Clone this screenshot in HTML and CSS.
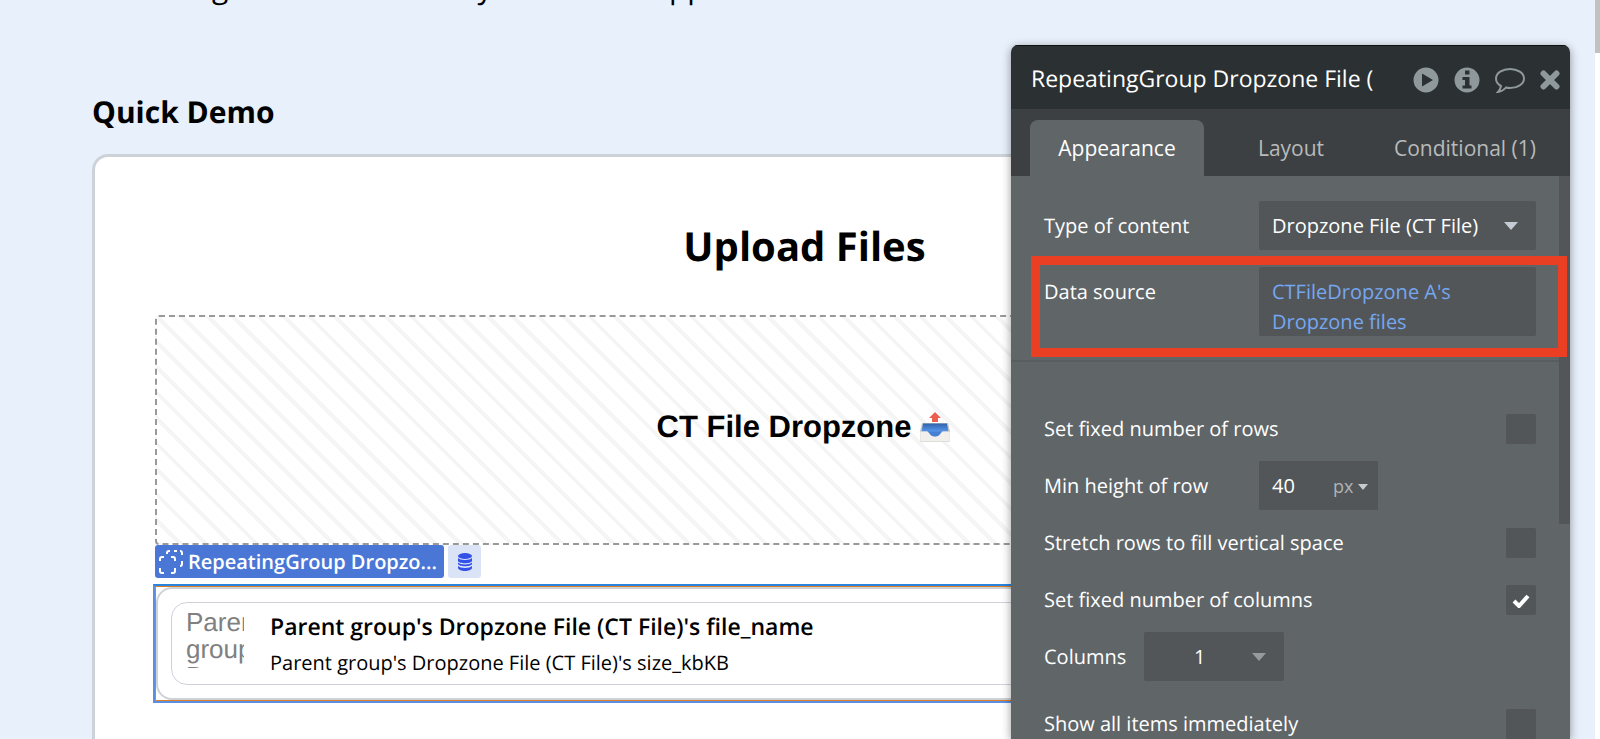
FILE: index.html
```html
<!DOCTYPE html>
<html lang="en">
<head>
  <meta charset="UTF-8">
  <title>File Dropzone Demo</title>
  <link rel="stylesheet" href="styles.css">
</head>
<body>
  <main class="page">
    <p class="intro">Collecting files from a steady data list in app</p>
    <h2 class="section-title">Quick Demo</h2>

    <section class="demo-card">
      <h1 class="demo-title">Upload Files</h1>

      <div class="dropzone">
        <span>CT File Dropzone</span>
        <svg class="tray-icon" viewBox="0 0 30 30" aria-hidden="true">
          <defs>
            <linearGradient id="tray" x1="0" y1="0" x2="0" y2="1">
              <stop offset="0" stop-color="#2f62ab"/>
              <stop offset="1" stop-color="#5a9bf0"/>
            </linearGradient>
          </defs>
          <path d="M2 11h26l2 8v9.500a1 1 0 0 1-1 1H1a1 1 0 0 1-1-1V19z" fill="#c9cbc8"/>
          <path d="M3 11.500h24l1.500 8.500H1.500z" fill="url(#tray)"/>
          <path d="M0 19.500h7c2.500 0 2.500 5 8 5s5.500-5 8-5h7v9a1 1 0 0 1-1 1H1a1 1 0 0 1-1-1z" fill="#f1f0ec" stroke="#d5d5d0" stroke-width=".6"/>
          <path d="M7 19.500h16c-2.500 0-2.500 5-8 5s-5.500-5-8-5z" fill="#4680d4"/>
          <path d="M15 0l6 6h-3v4h-6V6H9z" fill="#ec5f50"/>
        </svg>
      </div>

      <div class="element-tags">
        <span class="tag-name">
          <svg class="group-icon" viewBox="0 0 24 24" aria-hidden="true">
            <path d="M8 4V3a2 2 0 0 1 2-2h1M15 1h3M21 1h0a2 2 0 0 1 2 2v2M23 11v3a2 2 0 0 1-2 2M1 11V9a2 2 0 0 1 2-2h2M12 7h2a2 2 0 0 1 2 2v2M16 18v3a2 2 0 0 1-2 2h-2M5 23H3a2 2 0 0 1-2-2v-3"/>
          </svg>
          <span>RepeatingGroup Dropzo...</span>
        </span>
        <span class="tag-data">
          <svg class="data-icon" viewBox="0 0 14 18" aria-hidden="true">
            <ellipse cx="7" cy="3" rx="7" ry="3"/>
            <path d="M0 5c2 2.600 12 2.600 14 0v3c-1 3-13 3-14 0zM0 9.600c2 2.600 12 2.600 14 0v1.400c-1 3-13 3-14 0zM0 13c2 2.600 12 2.600 14 0v2c-1 4-13 4-14 0z"/>
          </svg>
        </span>
      </div>

      <div class="repeating-group">
        <div class="group-selection">
          <div class="group-frame">
            <div class="file-cell">
              <div class="file-thumb">Parent group's Dropzone</div>
              <div class="file-text">
                <div class="file-name">Parent group's Dropzone File (CT File)'s file_name</div>
                <div class="file-size">Parent group's Dropzone File (CT File)'s size_kbKB</div>
              </div>
            </div>
          </div>
        </div>
      </div>
    </section>
  </main>

  <div class="page-scrollbar"><div class="page-thumb"></div></div>

  <aside class="editor">
    <header class="editor-header">
      <span class="editor-title">RepeatingGroup Dropzone File (</span>
      <button class="icon-btn" aria-label="Preview">
        <svg width="26" height="26" viewBox="0 0 26 26"><path fill-rule="evenodd" d="M13 0.500a12.500 12.500 0 1 1 0 25a12.500 12.500 0 0 1 0-25zM9 6.500v13l11-6.500z"/></svg>
      </button>
      <button class="icon-btn" aria-label="Info">
        <svg width="26" height="26" viewBox="0 0 26 26"><path fill-rule="evenodd" d="M13 0.500a12.500 12.500 0 1 1 0 25a12.500 12.500 0 0 1 0-25zM11 3.500v4h4.500v-4zM8.500 10v3H11v5.500H8.500v3h9v-3h-2V10z"/></svg>
      </button>
      <button class="icon-btn" aria-label="Comment">
        <svg width="30" height="26" viewBox="0 0 30 26"><path class="line" d="M15 2c7.500 0 14 4 14 9.500S22.500 21 15 21c-1.500 0-2.500 0-4-.5C9 23 6.500 24.500 3 25c1.500-1.500 2.500-3 3-6C3 17.500 1 14.500 1 11.500C1 6 7.500 2 15 2z"/></svg>
      </button>
      <button class="icon-btn" aria-label="Close">
        <svg width="20" height="20" viewBox="0 0 20 20"><path class="cross" d="M3.500 3.500l13 13M16.500 3.500l-13 13"/></svg>
      </button>
    </header>

    <nav class="tabs">
      <button class="tab tab-active">Appearance</button>
      <button class="tab">Layout</button>
      <button class="tab">Conditional (1)</button>
    </nav>

    <div class="properties">
      <div class="data-section">
        <div class="row">
          <label class="row-label" for="content-type">Type of content</label>
          <span class="select-box wide">
            <select id="content-type"><option>Dropzone File (CT File)</option></select>
            <svg class="caret" viewBox="0 0 14 8" aria-hidden="true"><path d="M0 0h14L7 8z"/></svg>
          </span>
        </div>
        <div class="row row-source">
          <span class="row-label">Data source</span>
          <a class="expression wide" href="#">CTFileDropzone A's Dropzone files</a>
          <div class="highlight"></div>
        </div>
      </div>

      <div class="layout-section">
        <div class="row">
          <label class="row-label" for="fixed-rows">Set fixed number of rows</label>
          <input class="check" type="checkbox" id="fixed-rows">
        </div>
        <div class="row">
          <label class="row-label" for="min-height">Min height of row</label>
          <span class="unit-box">
            <input class="number" type="text" id="min-height" value="40">
            <button class="unit">px <svg class="caret-small" viewBox="0 0 10 6" aria-hidden="true"><path d="M0 0h10L5 6z"/></svg></button>
          </span>
        </div>
        <div class="row">
          <label class="row-label" for="stretch">Stretch rows to fill vertical space</label>
          <input class="check" type="checkbox" id="stretch">
        </div>
        <div class="row">
          <label class="row-label" for="fixed-columns">Set fixed number of columns</label>
          <span class="check-wrap">
            <input class="check" type="checkbox" id="fixed-columns" checked>
            <svg class="check-mark" viewBox="0 0 18 14" aria-hidden="true"><path d="M2 7l5 5L16 2"/></svg>
          </span>
        </div>
        <div class="row">
          <label class="row-label label-short" for="columns">Columns</label>
          <span class="select-box narrow">
            <select id="columns"><option>1</option></select>
            <svg class="caret caret-dim" viewBox="0 0 14 8" aria-hidden="true"><path d="M0 0h14L7 8z"/></svg>
          </span>
        </div>
        <div class="row row-last">
          <label class="row-label" for="show-all">Show all items immediately</label>
          <input class="check" type="checkbox" id="show-all">
        </div>
      </div>
      <div class="editor-thumb"></div>
    </div>
  </aside>
</body>
</html>
```

FILE: styles.css
```css
* {
  box-sizing: border-box;
}
body {
  margin: 0;
  height: 100vh;
  overflow: hidden;
  background: #e8f0fb;
  font-family: "Open Sans", sans-serif;
  text-rendering: geometricPrecision;
  color: #000;
}
button, input, select {
  font: inherit;
  color: inherit;
  border: none;
  background: none;
  padding: 0;
  margin: 0;
}

/* page behind the editor */
.page {
  display: flex;
  flex-direction: column;
  height: 100vh;
  padding: 0 83px 0 92px;
}
.intro {
  margin: -35px 0 0;
  font-size: 30px;
  line-height: 44px;
}
.section-title {
  margin: 83px 0 22px;
  font-size: 30px;
  line-height: 40px;
}
.demo-card {
  flex: 1;
  min-height: 0;
  padding: 61px 60px 0;
  background: #fff;
  border: 3px solid #cdd2d8;
  border-bottom: none;
  border-radius: 16px 16px 0 0;
}
.demo-title {
  margin: 0 0 41px;
  font-size: 40px;
  line-height: 56px;
  text-align: center;
}
.dropzone {
  display: flex;
  align-items: center;
  justify-content: center;
  gap: 9px;
  height: 230px;
  padding: 0 2px 7px 0;
  border: 2px dashed #999;
  border-radius: 4px;
  background: repeating-linear-gradient(45deg, #fff, #fff 14px, #f5f5f5 14px, #f5f5f5 18px);
  font-family: "Liberation Sans", Arial, sans-serif;
  font-size: 31px;
  font-weight: bold;
}
.tray-icon {
  width: 30px;
  height: 30px;
}
.element-tags {
  display: flex;
  gap: 4px;
  height: 33px;
  margin-bottom: 6px;
}
.tag-name {
  display: flex;
  align-items: center;
  gap: 5px;
  width: 289px;
  padding-left: 4px;
  background: #4a77d6;
  border-radius: 3px;
  color: #fff;
  font-size: 20px;
  font-weight: 600;
  white-space: nowrap;
}
.group-icon {
  width: 24px;
  height: 24px;
  fill: none;
  stroke: #fff;
  stroke-width: 2;
}
.tag-data {
  display: flex;
  align-items: center;
  justify-content: center;
  width: 33px;
  background: #dbe4f7;
  border-radius: 3px;
}
.data-icon {
  width: 14px;
  height: 18px;
  fill: #3350e8;
}
.repeating-group {
  margin: 0 -2px;
  border: 2px solid #5a8fe2;
  border-top-color: #2a84de;
}
.group-selection {
  border: 1px solid #dd7f22;
}
.group-frame {
  padding: 13px;
  border: 2px solid #cdd2d8;
  border-radius: 16px;
}
.file-cell {
  display: flex;
  gap: 26px;
  height: 83px;
  padding: 6px 14px;
  border: 1px solid #cfd2da;
  border-radius: 16px;
}
.file-thumb {
  width: 58px;
  height: 59px;
  overflow: hidden;
  color: #808080;
  font-family: "Liberation Sans", Arial, sans-serif;
  font-size: 26px;
  line-height: 27px;
}
.file-name {
  font-size: 23px;
  font-weight: 600;
  line-height: 34px;
}
.file-size {
  margin-top: 6px;
  font-size: 20px;
  line-height: 28px;
}

/* browser scrollbar */
.page-scrollbar {
  position: absolute;
  top: 0;
  right: 0;
  width: 5px;
  height: 100%;
  background: #fff;
}
.page-thumb {
  height: 53px;
  background: #c1c1c1;
}

/* property editor */
.editor {
  position: absolute;
  top: 45px;
  right: 30px;
  bottom: 0;
  width: 559px;
  display: flex;
  flex-direction: column;
  overflow: hidden;
  border-radius: 7px 7px 0 0;
  color: #fff;
  font-size: 20px;
  box-shadow: 0 2px 10px rgba(0, 0, 0, 0.4);
}
.editor-header {
  display: flex;
  align-items: center;
  gap: 15px;
  height: 64px;
  flex: none;
  padding: 4px 10px 0 20px;
  background: #2b3032;
  border-top: 1px solid #0d1213;
}
.editor-title {
  flex: 1;
  padding-bottom: 4px;
  font-size: 23px;
  white-space: nowrap;
}
.icon-btn {
  display: flex;
  fill: #8f989b;
}
.icon-btn .line {
  fill: none;
  stroke: #8f989b;
  stroke-width: 2;
}
.icon-btn .cross {
  stroke: #8f989b;
  stroke-width: 6;
  stroke-linecap: round;
}
.tabs {
  display: flex;
  height: 67px;
  flex: none;
  padding: 11px 18px 0 19px;
  background: #3c4042;
}
.tab {
  flex: 1;
  color: #b8babb;
  font-size: 21px;
}
.tab-active {
  background: #606568;
  border-radius: 8px 8px 0 0;
  color: #fff;
}
.properties {
  position: relative;
  flex: 1;
  min-height: 0;
  overflow: hidden;
  background: #606568;
}
.data-section {
  height: 186px;
  padding: 25px 34px 0 33px;
  border-bottom: 2px solid #585d60;
}
.layout-section {
  padding: 38px 34px 0 33px;
}
.row {
  display: flex;
  align-items: center;
  justify-content: space-between;
  height: 49px;
}
.layout-section .row {
  height: 57px;
}
.row-source {
  position: relative;
  align-items: flex-start;
  height: 69px;
  margin-top: 17px;
}
.row-source .row-label {
  padding-top: 10px;
}
.layout-section .row-last {
  height: 78px;
}
.row-label {
  flex: 1;
  line-height: 30px;
}
.wide {
  width: 277px;
}
.select-box {
  position: relative;
  height: 49px;
  background: #525658;
  border-radius: 2px;
}
.select-box select {
  width: 100%;
  height: 100%;
  padding-left: 13px;
  appearance: none;
}
.caret {
  position: absolute;
  right: 18px;
  top: 21px;
  width: 14px;
  height: 8px;
  fill: #c5cbd3;
  pointer-events: none;
}
.caret-dim {
  fill: #959a9c;
}
.expression {
  height: 69px;
  padding: 10px 60px 0 13px;
  background: #525658;
  border-radius: 2px;
  color: #75a7f0;
  line-height: 30px;
  text-decoration: none;
}
.highlight {
  position: absolute;
  top: -11px;
  left: -13px;
  right: -31px;
  height: 101px;
  border: 9px solid #ea3f23;
  z-index: 1;
}
.check {
  display: block;
  width: 30px;
  height: 30px;
  appearance: none;
  background: #525658;
  border-radius: 2px;
}
.check-wrap {
  position: relative;
}
.check-mark {
  position: absolute;
  left: 6px;
  top: 9px;
  width: 18px;
  height: 14px;
  fill: none;
  stroke: #fff;
  stroke-width: 4;
  pointer-events: none;
}
.unit-box {
  display: flex;
  align-items: center;
  width: 119px;
  height: 49px;
  margin-right: 158px;
  padding: 0 10px 0 13px;
  background: #525658;
}
.number {
  width: 50px;
  flex: 1;
}
.unit {
  color: #b0b3b5;
  font-size: 18px;
}
.caret-small {
  width: 10px;
  height: 6px;
  margin-bottom: 3px;
  fill: #c8cacb;
}
.label-short {
  flex: none;
  width: 100px;
}
.narrow {
  width: 140px;
  margin-right: auto;
}
.narrow select {
  padding-left: 50px;
}
.editor-thumb {
  position: absolute;
  top: 0;
  right: 0;
  width: 11px;
  height: 348px;
  background: #525658;
}
```
